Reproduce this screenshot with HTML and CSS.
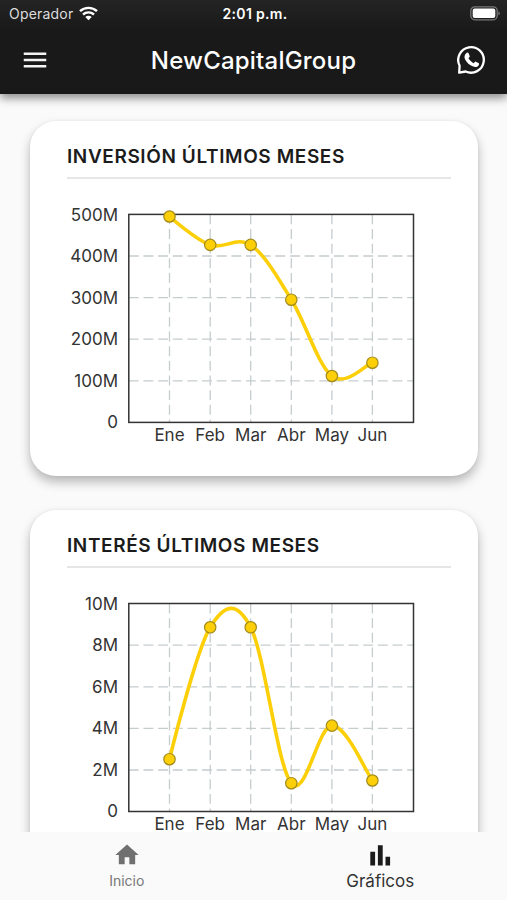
FILE: index.html
```html
<!DOCTYPE html>
<html lang="es">
<head>
<meta charset="utf-8">
<title>NewCapitalGroup</title>
<link rel="stylesheet" href="styles.css">
</head>
<body>
<div class="app">
  <header class="header">
    <div class="status">
      <div class="carrier"><span>Operador</span>
        <svg width="19" height="15" viewBox="0 0 19 15" fill="none" stroke="#fff" stroke-width="2.4"><path d="M1 5.2C5.8.7 13.2.7 18 5.2M4 8.5c3.2-2.9 7.8-2.9 11 0"/><path d="M9.5 14.2 6.3 11c1.8-1.6 4.6-1.6 6.4 0z" fill="#fff" stroke="none"/></svg>
      </div>
      <div class="time">2:01 p.m.</div>
      <svg class="battery" width="31" height="15" viewBox="0 0 31 15"><rect x=".8" y=".8" width="26.4" height="13" rx="4" fill="none" stroke="#777" stroke-width="1.3"/><rect x="2.7" y="2.6" width="22.6" height="9.4" rx="2" fill="#fff"/><path d="M28.4 5.2c2 .8 2 3.4 0 4.2z" fill="#777"/></svg>
    </div>
    <div class="toolbar">
      <svg width="30" height="30" viewBox="0 0 24 24" fill="#f4f4f4"><path d="M3 18h18v-2H3v2zm0-5h18v-2H3v2zm0-7v2h18V6H3z"/></svg>
      <h1>NewCapitalGroup</h1>
      <svg width="30" height="30" viewBox="0 0 30 30"><path d="M2.2 27.7 2.6 20.7A12.8 12.8 0 1 1 8.6 26.5Z" fill="none" stroke="#fff" stroke-width="2.3" stroke-linejoin="round"/><path d="M9.2 8.2c1-1 2-.8 2.5.2l1 2.5c.2.6-.2 1.1-1.2 2.2 1.200 2.500 2.900 4.100 5.300 5.100 1.100-1.300 1.500-1.800 2.100-1.500l2.500 1.200c.8.4.8.8.5 1.800-.8 2.200-3.300 2.800-5.700 1.900-3.700-1.300-6.600-4-8.200-7.300-1-2.100-.5-4.500 1.200-6.100Z" fill="#fff"/></svg>
    </div>
  </header>
  <main class="content">
    <section class="card">
      <h2>INVERSIÓN ÚLTIMOS MESES</h2>
      <svg class="chart" width="384" height="260" viewBox="67 190 384 260">
        <g class="grid">
          <path d="M128.800 256H413.500M128.800 297.600H413.500M128.800 339.200H413.500M128.800 380.800H413.500"/>
          <path d="M169.500 214.400V422.400M210.200 214.400V422.400M250.700 214.400V422.400M291.300 214.400V422.400M331.900 214.400V422.400M372.400 214.400V422.400"/>
        </g>
        <rect class="frame" x="128.800" y="214.400" width="284.700" height="208"/>
        <path class="line" d="M169.500 216.500C169.500 216.500 196 240 210.200 245S236.500 235.500 250.700 245S277.100 276.600 291.300 299.500S317.700 365 331.900 376S365.300 364.900 372.400 362.500"/>
        <g class="dots"><circle cx="169.500" cy="216.500" r="5.700"/><circle cx="210.200" cy="244.900" r="5.700"/><circle cx="250.700" cy="244.900" r="5.700"/><circle cx="291.300" cy="299.700" r="5.700"/><circle cx="331.900" cy="376" r="5.700"/><circle cx="372.400" cy="362.700" r="5.700"/></g>
        <g class="labels y"><text x="118" y="220.500">500M</text><text x="118" y="262">400M</text><text x="118" y="303.500">300M</text><text x="118" y="345">200M</text><text x="118" y="386.600">100M</text><text x="118" y="428">0</text></g>
        <g class="labels x"><text x="169.500" y="440.800">Ene</text><text x="210.200" y="440.800">Feb</text><text x="250.700" y="440.800">Mar</text><text x="291.300" y="440.800">Abr</text><text x="331.900" y="440.800">May</text><text x="372.400" y="440.800">Jun</text></g>
      </svg>
    </section>
    <section class="card">
      <h2>INTERÉS ÚLTIMOS MESES</h2>
      <svg class="chart" width="384" height="260" viewBox="67 578.500 384 260">
        <g class="grid">
          <path d="M128.800 644.700H413.500M128.800 686.300H413.500M128.800 727.900H413.500M128.800 769.500H413.500"/>
          <path d="M169.500 603V811M210.200 603V811M250.700 603V811M291.300 603V811M331.900 603V811M372.400 603V811"/>
        </g>
        <rect class="frame" x="128.800" y="603" width="284.700" height="208"/>
        <path class="line" d="M169.500 758.700C169.500 758.700 196 649.900 210.200 626.800S236.500 599.500 250.700 626.800S277.100 765.400 291.300 782.700S317.700 725.600 331.900 725.100S365.300 770.400 372.400 780"/>
        <g class="dots"><circle cx="169.500" cy="758.700" r="5.700"/><circle cx="210.200" cy="626.800" r="5.700"/><circle cx="250.700" cy="626.800" r="5.700"/><circle cx="291.300" cy="782.700" r="5.700"/><circle cx="331.900" cy="725.100" r="5.700"/><circle cx="372.400" cy="780" r="5.700"/></g>
        <g class="labels y"><text x="118" y="609">10M</text><text x="118" y="650.600">8M</text><text x="118" y="692.200">6M</text><text x="118" y="733.800">4M</text><text x="118" y="775.300">2M</text><text x="118" y="816.800">0</text></g>
        <g class="labels x"><text x="169.500" y="829.500">Ene</text><text x="210.200" y="829.500">Feb</text><text x="250.700" y="829.500">Mar</text><text x="291.300" y="829.500">Abr</text><text x="331.900" y="829.500">May</text><text x="372.400" y="829.500">Jun</text></g>
      </svg>
    </section>
  </main>
  <nav class="tabs">
    <div class="tab"><svg width="28" height="28" viewBox="0 0 24 24" fill="#707070"><path d="M10 20v-6h4v6h5v-8h3L12 3 2 12h3v8z"/></svg><span>Inicio</span></div>
    <div class="tab active"><svg width="28" height="28" viewBox="0 0 28 28" fill="#1b1b1b"><path d="M4.300 10.700h4.800v13.800H4.300zM11.900 4.300h4.800v20.200h-4.800zM19.500 15.800h4.600v8.700h-4.600z"/></svg><span>Gráficos</span></div>
  </nav>
</div>
</body>
</html>
```
FILE: styles.css
```css
* { box-sizing: border-box; }
body { margin: 0; background: #fafafa; font-family: Inter, "Liberation Sans", sans-serif; color: #1b1b1b; }
.app { height: 900px; display: flex; flex-direction: column; overflow: hidden; }
.header { flex: none; height: 94px; background: linear-gradient(#242424, #191919 30px); color: #fff; box-shadow: 0 4px 9px rgba(0,0,0,.45); z-index: 1; }
.status { height: 27px; padding: 0 6px 0 9px; display: grid; grid-template-columns: 1fr auto 1fr; align-items: center; font-size: 14px; }
.carrier { display: flex; align-items: center; gap: 6px; color: #ddd; letter-spacing: .2px; }
.time { font-weight: 600; letter-spacing: .3px; }
.battery { justify-self: end; }
.toolbar { height: 66px; padding: 0 20px; display: flex; align-items: center; justify-content: space-between; }
h1 { margin: 0; font-size: 24px; font-weight: 500; letter-spacing: .2px; }
.content { flex: 1; min-height: 0; overflow: hidden; padding: 27px 29px 0 30px; display: flex; flex-direction: column; gap: 34px; }
.card { flex: none; height: 354.500px; padding: 21px 27px 0 37px; border-radius: 26px; background: #fff; box-shadow: 0 6px 11px rgba(0,0,0,.27), 0 0 3px rgba(0,0,0,.06); }
h2 { margin: 0; height: 37px; line-height: 30px; border-bottom: 2px solid #e6e6e6; font-size: 19px; font-weight: 600; letter-spacing: .6px; white-space: nowrap; }
.chart { display: block; margin-top: 11px; }
.grid { fill: none; stroke: #c5cdcf; stroke-width: 1.300; stroke-dasharray: 9.900 4.750; }
.frame { fill: none; stroke: #333; stroke-width: 1.500; }
.line { fill: none; stroke: #fccf08; stroke-width: 3.600; }
.dots { fill: #fccf08; stroke: #a18a1b; stroke-width: 1.200; }
.labels { font-size: 17px; fill: #333; }
.y { text-anchor: end; }
.x { text-anchor: middle; }
.tabs { flex: none; height: 68px; display: flex; background: #fafafa; z-index: 1; }
.tab { flex: 1; padding-top: 9px; display: flex; flex-direction: column; align-items: center; font-size: 14px; color: #777; }
.tab span { line-height: 24px; }
.active { font-size: 17px; color: #333; }
```
